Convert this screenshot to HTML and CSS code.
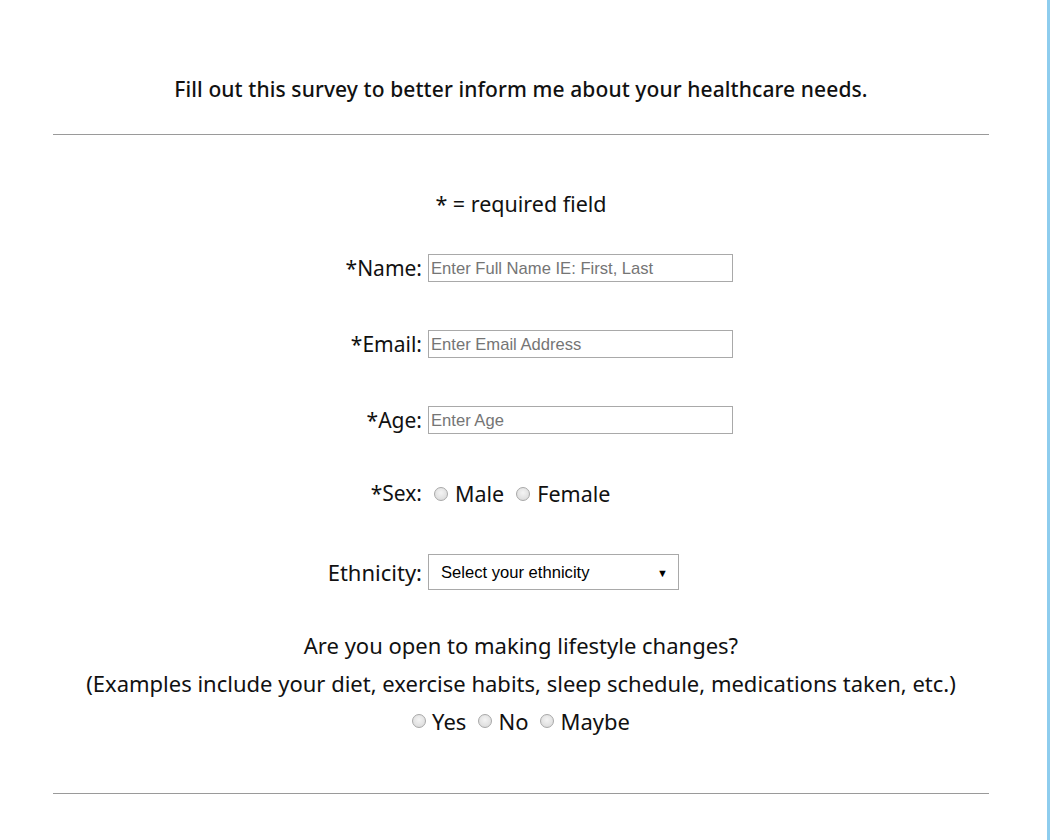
FILE: index.html
```html
<!DOCTYPE html>
<html>
<head>
<meta charset="utf-8">
<link rel="stylesheet" href="styles.css">
</head>
<body>
<div class="page">
  <main class="survey">
    <h2 class="title">Fill out this survey to better inform me about your healthcare needs.</h2>
    <hr class="rule">
    <p class="note">* = required field</p>
    <form class="form">
      <div class="row">
        <label class="label" for="name">*Name:</label>
        <input class="field" id="name" type="text" placeholder="Enter Full Name IE: First, Last">
      </div>
      <div class="row">
        <label class="label" for="email">*Email:</label>
        <input class="field" id="email" type="text" placeholder="Enter Email Address">
      </div>
      <div class="row">
        <label class="label" for="age">*Age:</label>
        <input class="field" id="age" type="text" placeholder="Enter Age">
      </div>
      <div class="row row-sex">
        <span class="label">*Sex:</span>
        <div class="choices">
          <label class="choice"><input class="radio" type="radio" name="sex">Male</label>
          <label class="choice"><input class="radio" type="radio" name="sex">Female</label>
        </div>
      </div>
      <div class="row">
        <label class="label label-eth" for="eth">Ethnicity:</label>
        <div class="select" id="eth">
          <span class="select-text">Select your ethnicity</span>
          <span class="select-arrow">&#9660;</span>
        </div>
      </div>
      <div class="question">
        <p class="q-line">Are you open to making lifestyle changes?</p>
        <p class="q-line">(Examples include your diet, exercise habits, sleep schedule, medications taken, etc.)</p>
        <div class="choices center">
          <label class="choice"><input class="radio" type="radio" name="life">Yes</label>
          <label class="choice"><input class="radio" type="radio" name="life">No</label>
          <label class="choice"><input class="radio" type="radio" name="life">Maybe</label>
        </div>
      </div>
    </form>
    <hr class="rule bottom">
  </main>
  <div class="edge"></div>
</div>
</body>
</html>
```

FILE: styles.css
```css
html, body {
  margin: 0;
  padding: 0;
  background: #fff;
}
body {
  font-family: "Noto Sans", "Open Sans", sans-serif;
  color: #111;
}
.page {
  display: flex;
  width: 1050px;
  height: 840px;
  overflow: hidden;
}
.survey {
  margin-left: 53px;
  width: 936px;
  padding-top: 73px;
}
.edge {
  margin-left: auto;
  width: 3px;
  background: #8ecdee;
}
.title {
  margin: 0;
  text-align: center;
  font-size: 21px;
  font-weight: 500;
  line-height: 32px;
  letter-spacing: 0.1px;
}
.rule {
  margin: 29px 0 0;
  border: 0;
  border-top: 1px solid #9a9a9a;
  height: 0;
}
.note {
  margin: 54px 0 0;
  text-align: center;
  font-size: 21.5px;
  line-height: 30px;
}
.form {
  margin-top: 11px;
  display: flex;
  flex-direction: column;
}
.row {
  display: grid;
  grid-template-columns: 369px 1fr;
  column-gap: 6px;
  align-items: center;
  height: 76px;
}
.row-sex {
  align-items: start;
  padding-top: 21px;
  box-sizing: border-box;
}
.label {
  text-align: right;
  font-size: 21px;
}
.label-eth {
  font-size: 22px;
}
.field {
  box-sizing: border-box;
  width: 305px;
  height: 28px;
  border: 1px solid #a9a9a9;
  padding: 1px 2px 0;
  font-family: "Liberation Sans", Arial, sans-serif;
  font-size: 16.6px;
  margin: 0;
}
.field::placeholder {
  color: #757575;
}
.choices {
  display: flex;
  align-items: center;
  gap: 12px;
  padding-left: 6px;
}
.choices.center {
  justify-content: center;
  padding-left: 0;
  padding-top: 4px;
  gap: 12px;
}
.choice {
  display: flex;
  align-items: center;
  gap: 7px;
  font-size: 21.5px;
}
.center .choice {
  font-size: 22px;
  gap: 6px;
}
.radio {
  appearance: none;
  -webkit-appearance: none;
  margin: 0;
  width: 14px;
  height: 14px;
  border-radius: 50%;
  border: 1px solid #a8a8a8;
  background: radial-gradient(circle at 50% 40%, #f4f4f4, #d6d6d6);
  box-sizing: border-box;
}
.select {
  box-sizing: border-box;
  width: 251px;
  height: 36px;
  border: 1px solid #a9a9a9;
  display: flex;
  align-items: center;
  padding: 1px 10px 0 12px;
  font-family: "Liberation Sans", Arial, sans-serif;
  font-size: 16.6px;
  color: #000;
}
.select-arrow {
  margin-left: auto;
  font-size: 11px;
}
.question {
  margin-top: 16px;
  text-align: center;
}
.q-line {
  margin: 0;
  font-size: 22px;
  line-height: 38px;
}
.rule.bottom {
  margin-top: 57px;
}
```
